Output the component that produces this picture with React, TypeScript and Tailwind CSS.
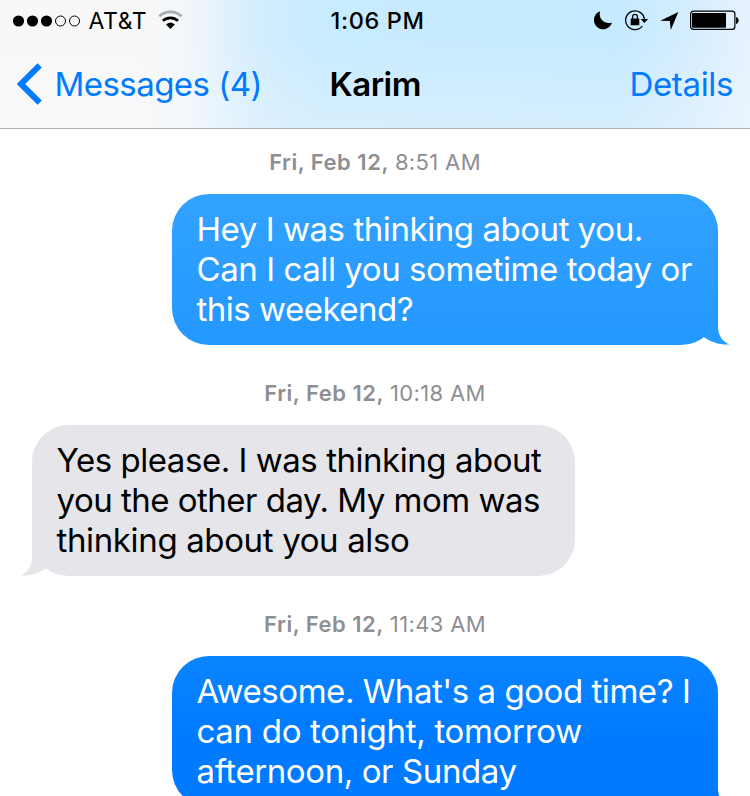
import { clsx } from "clsx";

interface Line {
  text: string;
  spacing: string;
}

interface Message {
  day: string;
  time: string;
  side: "left" | "right";
  bubble: string;
  tail: string;
  lines: Line[];
}

const messages: Message[] = [
  {
    day: "Fri, Feb 12,",
    time: "8:51 AM",
    side: "right",
    bubble: "w-[546px] bg-linear-to-b from-[#32a2ff] to-[#2398ff] text-white",
    tail: "text-[#2499ff]",
    lines: [
      { text: "Hey I was thinking about you.", spacing: "tracking-[-0.44px]" },
      { text: "Can I call you sometime today or", spacing: "tracking-[-0.43px]" },
      { text: "this weekend?", spacing: "tracking-[-0.5px]" },
    ],
  },
  {
    day: "Fri, Feb 12,",
    time: "10:18 AM",
    side: "left",
    bubble: "w-[543px] bg-[#e5e5ea] text-black",
    tail: "text-[#e5e5ea]",
    lines: [
      { text: "Yes please. I was thinking about", spacing: "tracking-[-0.46px]" },
      { text: "you the other day. My mom was", spacing: "tracking-[-0.51px]" },
      { text: "thinking about you also", spacing: "tracking-[-0.36px]" },
    ],
  },
  {
    day: "Fri, Feb 12,",
    time: "11:43 AM",
    side: "right",
    bubble: "w-[546px] bg-linear-to-b from-[#0b84ff] to-[#007aff] to-55% text-white",
    tail: "text-[#007aff]",
    lines: [
      { text: "Awesome. What's a good time? I", spacing: "tracking-[-0.45px]" },
      { text: "can do tonight, tomorrow", spacing: "tracking-[-0.31px]" },
      { text: "afternoon, or Sunday", spacing: "tracking-[-0.4px]" },
    ],
  },
];

const StatusBar = () => {
  return (
    <div className="flex h-10 items-center pl-[13px] pr-[11px]">
      <div className="flex w-[317.5px] items-center">
        <svg className="mt-px" width="68" height="12" viewBox="0 0 68 12">
          <circle cx="5.5" cy="6" r="5.6" />
          <circle cx="19.5" cy="6" r="5.6" />
          <circle cx="33.5" cy="6" r="5.6" />
          <circle cx="47.5" cy="6" r="5" fill="none" stroke="black" />
          <circle cx="61.5" cy="6" r="5" fill="none" stroke="black" />
        </svg>
        <span className="ml-[7.5px] w-[57.5px] pt-0.5 text-[23px] tracking-[0.6px]">AT&amp;T</span>
        <svg className="ml-[12px]" width="26" height="20" viewBox="0 0 26 20">
          <path d="M1.2 6.300C7.800 .5 17 .5 23.600 6.300" fill="none" stroke="#a9adb0" strokeWidth="2.800" />
          <path d="M4.800 10.800c4.500-4 10.700-4 15.200 0" fill="none" stroke="black" strokeWidth="2.800" />
          <path d="M8 14.500c2.600-2.400 6.200-2.400 8.800 0l-4.400 4.500Z" />
        </svg>
      </div>
      <span className="pt-0.5 text-[23.5px] font-medium tracking-[0.65px]">1:06 PM</span>
      <div className="ml-auto flex items-center">
        <svg width="20" height="20" viewBox="0 0 20 20">
          <path d="M7.200 1.300C4.800 8 11 15 19 12.500A9.200 9.200 0 1 1 7.200 1.300Z" />
        </svg>
        <svg className="ml-[11px]" width="25" height="22" viewBox="0 0 25 22">
          <path d="M18.300 17.200A9.400 9.400 0 1 1 20.400 10.500" fill="none" stroke="black" strokeWidth="1.300" />
          <path d="M16.700 10h7.400l-3.700 4Z" />
          <rect x="6.700" y="9.600" width="8.600" height="6.600" rx=".5" />
          <path d="M8.600 10V7.800a2.400 2.400 0 0 1 4.800 0V10" fill="none" stroke="black" strokeWidth="1.300" />
        </svg>
        <svg className="ml-[11px]" width="19" height="20" viewBox="0 0 19 20">
          <path d="M18.300 2 .3 10.700l9.500.2 1 9Z" />
        </svg>
        <svg className="ml-[11px]" width="49" height="20" viewBox="0 0 49 20">
          <rect x=".6" y="1.100" width="44.300" height="18.300" rx="3" fill="none" stroke="black" strokeWidth="1.200" />
          <rect x="2" y="3" width="34" height="14.700" rx=".8" />
          <path d="M46 7c3.500.4 3.500 6.600 0 7Z" />
        </svg>
      </div>
    </div>
  );
};

const NavBar = () => {
  return (
    <div className="flex h-[88px] items-center px-[17px] text-[33px] text-[#007aff]">
      <div className="flex w-[312.5px] items-center">
        <svg width="26" height="42" viewBox="0 0 26 42">
          <path d="M22.700 2.300 4 21l18.700 18.700" fill="none" stroke="currentColor" strokeWidth="6" />
        </svg>
        <span className="ml-[11.5px] whitespace-nowrap pt-0.5 tracking-[-0.55px]">Messages (4)</span>
      </div>
      <h1 className="pt-0.5 font-semibold tracking-[-0.5px] text-black">Karim</h1>
      <span className="ml-auto pt-0.5 tracking-[-0.35px]">Details</span>
    </div>
  );
};

const MessageBubble = ({ message }: { message: Message }) => {
  const right = message.side === "right";
  return (
    <div
      className={clsx(
        "relative h-[151px] rounded-[37px] pl-[24.5px] pt-[15px] text-[33px] leading-[40px]",
        right ? "mr-8 self-end" : "ml-8 self-start",
        message.bubble
      )}
    >
      {message.lines.map((line) => (
        <p key={line.text} className={clsx("whitespace-nowrap", line.spacing)}>
          {line.text}
        </p>
      ))}
      <svg
        className={clsx(
          "absolute bottom-0",
          message.tail,
          right ? "-right-3" : "-left-3 -scale-x-100"
        )}
        width="26"
        height="38"
        viewBox="0 0 26 38"
      >
        <path d="M14 0v19c0 9 4 15.500 11.500 18.500C15.500 38 7 35 0 30.200V24Z" fill="currentColor" />
      </svg>
    </div>
  );
};

const App = () => {
  return (
    <div className="flex h-[796px] w-[750px] flex-col overflow-hidden bg-white font-['Inter','Liberation_Sans',sans-serif]">
      <header className="h-[129px] shrink-0 border-b border-[#b0b3b5] bg-[linear-gradient(to_bottom,rgba(246,249,253,0)_30%,rgba(246,249,253,0.32)),linear-gradient(to_right,#f8f8f8_0px,#f8f8f8_140px,#f3f7fa_185px,#e0f1fd_225px,#d2edfe_260px,#c8ebff_320px,#c6eaff_620px,#d2edff_680px,#e6f2fe_750px)]">
        <StatusBar />
        <NavBar />
      </header>
      <main className="flex flex-col">
        {messages.map((message) => (
          <section key={message.time} className="mb-[15px] flex flex-col">
            <div className="flex h-[65px] items-center justify-center gap-[6px] pt-0.5 text-[22px] text-[#8e8e93]">
              <span className="font-semibold tracking-[0.5px]">{message.day}</span>
              <span className="tracking-[0.35px]">{message.time}</span>
            </div>
            <MessageBubble message={message} />
          </section>
        ))}
      </main>
    </div>
  );
};

export default App;
